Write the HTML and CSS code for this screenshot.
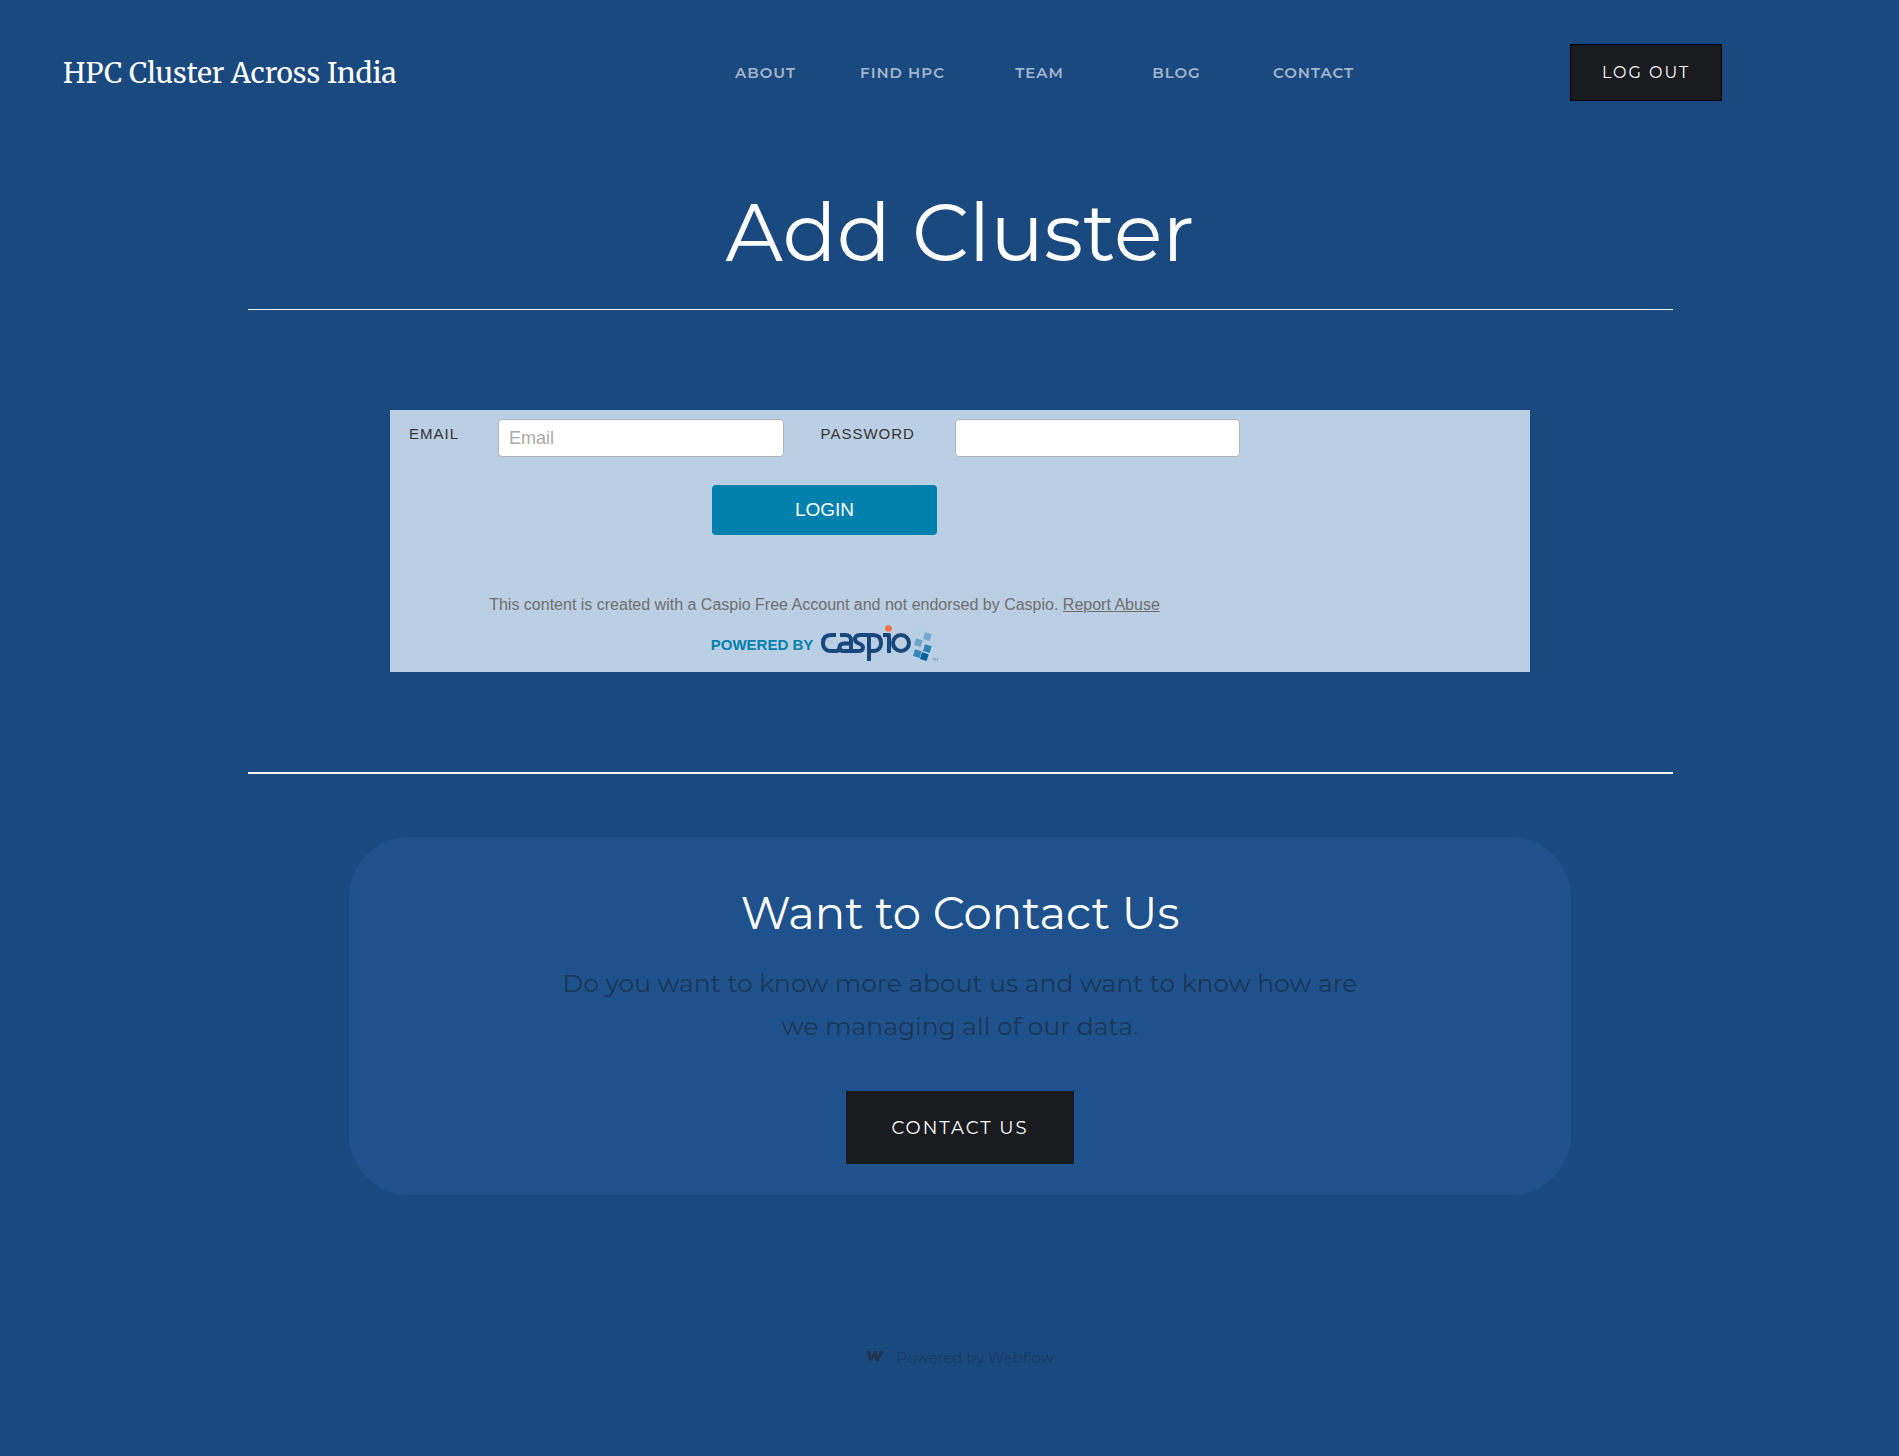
FILE: index.html
```html
<!DOCTYPE html>
<html lang="en">
<head>
<meta charset="utf-8">
<meta name="viewport" content="width=device-width, initial-scale=1">
<title>Add Cluster</title>
<link rel="stylesheet" href="styles.css">
</head>
<body>
<header class="site-header">
  <a class="brand" href="#">HPC Cluster Across India</a>
  <nav class="nav">
    <a href="#">ABOUT</a>
    <a href="#">FIND HPC</a>
    <a href="#">TEAM</a>
    <a href="#">BLOG</a>
    <a href="#">CONTACT</a>
  </nav>
  <button class="logout" type="button">LOG OUT</button>
</header>

<main class="main">
  <h1 class="title">Add Cluster</h1>
  <section class="form-section">
    <div class="form-panel">
      <form class="login-form">
        <div class="fields">
          <label for="email">EMAIL</label>
          <input id="email" type="email" placeholder="Email">
          <label for="password">PASSWORD</label>
          <input id="password" type="password">
        </div>
        <button class="login" type="submit">LOGIN</button>
        <p class="notice">This content is created with a Caspio Free Account and not endorsed by Caspio. <a href="#">Report Abuse</a></p>
        <a class="powered" href="#" aria-label="Powered by Caspio">
          <span>POWERED BY</span>
          <svg width="118" height="38" viewBox="0 0 118 38" fill="none" aria-hidden="true">
            <g stroke="#18477d" stroke-width="4" stroke-linejoin="round">
              <path d="M16 10H11C5 10 3 13.500 3 18S5.500 26 11 26H16C18.500 26 19.500 24.500 19.500 22.500C19.500 20 21 18.500 24 18.500H31"/>
              <path d="M20 10H25C29.500 10 31 12 31 16V26H24C21 26 19.500 24.500 19.500 22.500"/>
              <path d="M31 26H38C41.500 26 43 24.500 43 22.500C43 17.500 35 19.500 35 14.500C35 11.500 37 10 40 10H53C59 10 61 13.500 61 18S58.500 26 53 26H49"/>
              <path d="M49 11V36"/>
              <path d="M63 10H69V28"/>
              <ellipse cx="81" cy="18" rx="8" ry="8"/>
            </g>
            <circle cx="68.500" cy="3.500" r="3.300" fill="#f37043"/>
            <rect x="96" y="2" width="7" height="7" fill="#b0d2e5" transform="rotate(17 99 5)"/>
            <rect x="104" y="8" width="7" height="7" fill="#73abce" transform="rotate(17 107 11)"/>
            <rect x="95" y="14" width="7" height="7" fill="#6ba6cb" transform="rotate(17 98 17)"/>
            <rect x="104" y="20" width="7" height="7" fill="#2f82b5" transform="rotate(17 107 23)"/>
            <rect x="94" y="25" width="7" height="7" fill="#3687b8" transform="rotate(17 97 28)"/>
            <rect x="101" y="28" width="7" height="7" fill="#00609e" transform="rotate(17 104 31)"/>
            <path d="M112.500 33.500H115M113.750 33.500V36M115.500 36V33.500L116.500 35L117.500 33.500V36" stroke="#6d8db4" stroke-width=".5"/>
          </svg>
        </a>
      </form>
    </div>
  </section>
  <section class="contact-card">
    <h2>Want to Contact Us</h2>
    <p>Do you want to know more about us and want to know how are we managing all of our data.</p>
    <button class="contact" type="button">CONTACT US</button>
  </section>
</main>

<footer class="site-footer">
  <a href="#">
    <svg width="18" height="12" viewBox="0 0 18 12" aria-hidden="true"><path fill="#20344f" d="M1 1H4.500L5 7L8 1H11L11.500 7L14 1H17.500L12.500 11H9.500L8.700 6L6 11H3Z"/></svg>
    <span>Powered by Webflow</span>
  </a>
</footer>
</body>
</html>
```

FILE: styles.css
```css
* { box-sizing: border-box; }

body {
  margin: 0;
  padding-left: 21px;
  background: #1a497f;
  color: #fff;
  font-family: Montserrat, Inter, sans-serif;
}

h1, h2, p { margin: 0; font-weight: 400; }
a { color: inherit; text-decoration: none; }
button { cursor: pointer; color: #fff; font-family: inherit; }

.site-header {
  display: grid;
  grid-template-columns: 1fr 685px 1fr;
  align-items: center;
  padding: 44px 39px 0 42px;
}

.brand {
  font-family: Merriweather, "Liberation Serif", serif;
  font-size: 28px;
}

.nav {
  display: grid;
  grid-template-columns: repeat(5, 1fr);
  margin-left: 78px;
  margin-right: -78px;
  text-align: center;
  color: #a3b6cc;
  font-size: 15px;
  font-weight: 600;
  letter-spacing: 1px;
}

.logout {
  justify-self: end;
  margin-right: 138px;
  width: 152px;
  height: 57px;
  border: 1px solid #000;
  background: #1a1b1f;
  font-size: 16px;
  letter-spacing: 2px;
}

.main {
  width: 76%;
  max-width: 1425px;
  margin: 0 auto;
}

.title {
  padding: 84px 0 28px;
  border-bottom: 1px solid #f5f5f5;
  text-align: center;
  font-size: 80px;
  line-height: 96px;
}

.form-section {
  padding: 100px 0;
  border-bottom: 2px solid #f5f5f5;
}

.form-panel {
  width: 80%;
  margin: 0 auto;
  background: #bbcfe4;
  font-family: "Liberation Sans", Arial, sans-serif;
}

.login-form {
  display: flex;
  flex-direction: column;
  align-items: center;
  max-width: 869px;
  padding: 9px 19px;
}

.fields {
  display: grid;
  grid-template-columns: 89px 1fr 171px 1fr;
  width: 100%;
}

.fields label {
  padding-top: 6px;
  color: #333;
  font-size: 15px;
  line-height: 18px;
  letter-spacing: 1px;
}

.fields label:nth-of-type(2) { padding-left: 37px; }

.fields input {
  width: 100%;
  min-width: 0;
  height: 38px;
  padding: 0 10px;
  border: 1px solid #b0b4b8;
  border-radius: 4px;
  background: #fff;
  font: 18px "Liberation Sans", Arial, sans-serif;
}

.fields input::placeholder { color: #a9a9a9; }

.login {
  width: 225px;
  height: 50px;
  margin-top: 28px;
  border: 0;
  border-radius: 4px;
  background: #0080ac;
  font-size: 19px;
}

.notice {
  margin-top: 60px;
  color: #6e6e6e;
  font-size: 16px;
  line-height: 20px;
}

.notice a { text-decoration: underline; }

.powered {
  display: flex;
  align-items: center;
  gap: 7px;
  margin-top: 10px;
  color: #0080ac;
  font-size: 15px;
  font-weight: 700;
}

.contact-card {
  display: flex;
  flex-direction: column;
  align-items: center;
  max-width: 1222px;
  margin: 63px auto 0;
  padding: 48px 64px 31px;
  border-radius: 60px;
  background: #1f528c;
  text-align: center;
}

.contact-card h2 {
  font-size: 45px;
  line-height: 56px;
}

.contact-card p {
  max-width: 820px;
  margin-top: 21px;
  color: #1b3556;
  font-size: 25px;
  line-height: 43px;
}

.contact {
  width: 228px;
  height: 73px;
  margin-top: 43px;
  border: 0;
  background: #1a1b1f;
  font-size: 18px;
  letter-spacing: 2px;
}

.site-footer {
  display: flex;
  justify-content: center;
  padding: 152px 0 80px;
  color: #1b3556;
  font-size: 15px;
  font-weight: 300;
  line-height: 22px;
}

.site-footer a {
  display: flex;
  gap: 12px;
}

.site-footer svg { margin-top: 3px; }
```
